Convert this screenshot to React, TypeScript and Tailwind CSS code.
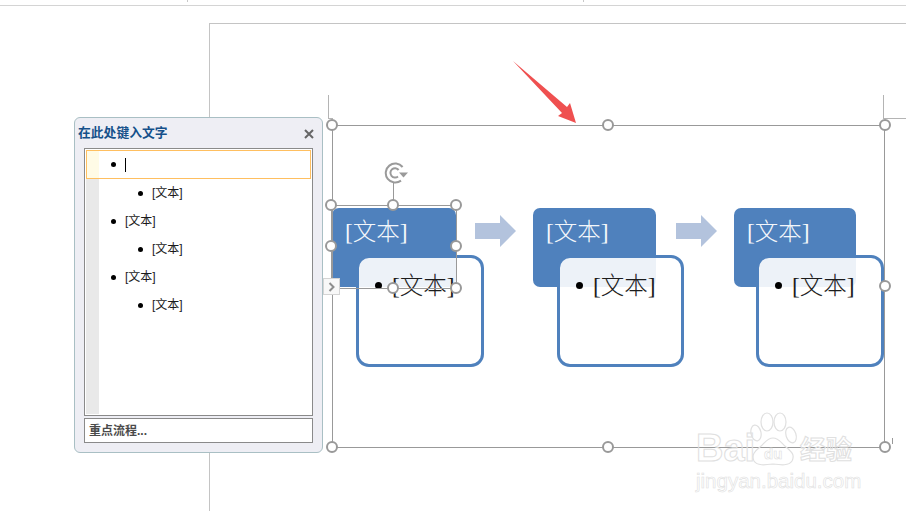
const sans = 'font-["Liberation_Sans","Noto_Sans_CJK_SC",sans-serif]'
const serif = 'font-["Liberation_Serif","Noto_Sans_CJK_SC",serif]'

const handles = [
  'left-[332px] top-[125px]',
  'left-[608px] top-[125px]',
  'left-[885px] top-[125px]',
  'left-[885px] top-[286px]',
  'left-[332px] top-[447px]',
  'left-[608px] top-[447px]',
  'left-[885px] top-[447px]',
  'left-[331px] top-[205px]',
  'left-[393px] top-[205px]',
  'left-[456px] top-[205px]',
  'left-[331px] top-[246px]',
  'left-[456px] top-[246px]',
  'left-[393px] top-[288px]',
  'left-[456px] top-[288px]',
]

const outline = [
  { text: '', sub: false },
  { text: '[文本]', sub: true },
  { text: '[文本]', sub: false },
  { text: '[文本]', sub: true },
  { text: '[文本]', sub: false },
  { text: '[文本]', sub: true },
]

function Handle({ at }: { at: string }) {
  return (
    <div
      className={`absolute ${at} z-30 -ml-[6px] -mt-[6px] h-[12px] w-[12px] rounded-full border-2 border-[#999999] bg-white`}
    />
  )
}

function ProcessStep({ head, card }: { head: string; card: string }) {
  return (
    <div className="relative h-[159px] w-[143px] shrink-0">
      <div
        className={`${head} h-[79px] rounded-[7px] bg-[#4f81bd] pl-[13px] pt-[10px] text-[23.5px] font-light leading-[28px] text-[#f4f7fb] ${serif}`}
      >
        [文本]
      </div>
      <div
        className={`absolute ${card} top-[47px] flex h-[112px] items-start gap-[10px] rounded-[13px] border-[3px] border-[#4f81bd] bg-white/90 pl-[16px] pt-[14px] text-[23.5px] font-light leading-[28px] text-[#1c1c1c] ${serif}`}
      >
        <span className="mt-[10px] h-[7px] w-[7px] shrink-0 rounded-full bg-black" />
        <span className="whitespace-nowrap">[文本]</span>
      </div>
    </div>
  )
}

function BlockArrow() {
  return (
    <svg className="mr-[17px] mt-[7px] shrink-0" width="41" height="32" viewBox="0 0 41 32">
      <path d="M0 8h25V0l16 16-16 16v-8H0z" fill="#b3c3dd" />
    </svg>
  )
}

function TextPane() {
  return (
    <div
      className={`absolute left-[74px] top-[117px] z-40 flex h-[336px] w-[249px] flex-col rounded-[6px] border border-[#a9bfc4] bg-[#eeeef4] px-[9px] pb-[9px] ${sans}`}
    >
      <div className="flex h-[30px] shrink-0 items-center justify-between">
        <span className="-ml-[6px] text-[12.8px] font-bold text-[#15508a]">在此处键入文字</span>
        <svg width="10" height="10" viewBox="0 0 10 10" className="-mr-[1px] mt-[1px]">
          <path d="M1 1l8 8M9 1l-8 8" stroke="#666666" strokeWidth="2" />
        </svg>
      </div>
      <div className="relative min-h-0 flex-1 border border-[#8a8a8a] bg-white p-px">
        <div className="absolute bottom-px left-px top-px w-[13px] bg-[#e9e9e9]" />
        <div className="relative">
          {outline.map((row, i) => (
            <div
              key={i}
              className={`flex items-center text-[12px] text-[#1a1a1a] ${
                i === 0
                  ? 'h-[29px] border border-[#ffbf60] bg-[linear-gradient(90deg,#fffbe6_12px,#ffffff_12px)]'
                  : 'h-[28px]'
              } ${row.sub ? 'pl-[52px]' : i === 0 ? 'pl-[24px]' : 'pl-[25px]'}`}
            >
              <span className="mr-[9px] h-[5px] w-[5px] rounded-full bg-black" />
              {row.text === '' ? <span className="h-[14px] w-px bg-black" /> : row.text}
            </div>
          ))}
        </div>
      </div>
      <div className="mt-[2px] flex h-[25px] shrink-0 items-center border border-[#8a8a8a] bg-white pl-[4px] text-[12px] font-bold text-[#4a4a4a]">
        重点流程...
      </div>
    </div>
  )
}

function Watermark() {
  const outlined = 'text-transparent [-webkit-text-stroke:1px_#e0e0e0]'
  return (
    <div className={`absolute left-[696px] top-[411px] z-20 flex w-[165px] flex-col ${sans}`}>
      <div className="flex h-[56px] items-end">
        <span className={`w-[54px] shrink-0 text-[38px] font-bold leading-[38px] ${outlined}`}>Bai</span>
        <svg width="48" height="56" viewBox="0 0 48 56" fill="none" stroke="#e0e0e0" strokeWidth="1.2" className="shrink-0">
          <ellipse cx="6" cy="22" rx="5" ry="8" transform="rotate(-12 6 22)" />
          <ellipse cx="17" cy="11" rx="6" ry="9" />
          <ellipse cx="30" cy="11" rx="6" ry="9" />
          <ellipse cx="41" cy="24" rx="5" ry="8" transform="rotate(-18 41 24)" />
          <path d="M23 27c6 0 8 5 13 9 6 5 9 8 6 14-3 5-11 4-19 3-8 1-16 2-19-3-3-6 1-10 6-14 5-4 7-9 13-9z" />
          <text x="14" y="48" fontSize="15" fontWeight="700" strokeWidth="0.6">du</text>
        </svg>
        <span className={`ml-[2px] text-[26px] font-bold leading-[34px] ${outlined}`}>经验</span>
      </div>
      <div className="mt-[2px] whitespace-nowrap text-[20.5px] leading-[24px] text-transparent [-webkit-text-stroke:0.6px_#e0e0e0]">
        jingyan.baidu.com
      </div>
    </div>
  )
}

export default function App() {
  return (
    <div className="relative h-[511px] w-[906px] overflow-hidden bg-white">
      {/* page edges and crop marks */}
      <div className="absolute left-0 top-[5px] h-px w-full bg-[#d4d4d4]" />
      <div className="absolute left-[187px] top-0 h-[2px] w-px bg-[#c8c8c8]" />
      <div className="absolute left-[583px] top-0 h-[2px] w-px bg-[#c8c8c8]" />
      <div className="absolute left-[209px] top-[23px] h-[488px] w-[697px] border-l border-t border-[#c4c4c4]" />
      <div className="absolute left-[328px] top-[95px] h-[24px] w-[5px] border-b border-l border-[#b4b4b4]" />
      <div className="absolute left-[883px] top-[95px] h-[24px] w-[23px] border-b border-l border-[#b4b4b4]" />

      {/* SmartArt frame */}
      <div className="absolute left-[332px] top-[125px] z-20 h-[323px] w-[553px] border border-[#999999]" />
      <div className="absolute left-[889px] top-[438px] z-20 h-[6px] w-[4px] border-r border-[#999999]" />

      <div className="absolute left-[332px] top-[208px] flex items-start">
        <ProcessStep head="w-[124px]" card="left-[24px] w-[128px]" />
        <BlockArrow />
        <ProcessStep head="w-[123px]" card="left-[24px] w-[127px]" />
        <BlockArrow />
        <ProcessStep head="w-[122px]" card="left-[22px] w-[128px]" />
      </div>

      {/* selected shape */}
      <div className="absolute left-[331px] top-[205px] z-20 h-[84px] w-[126px] border border-[#999999]" />
      <div className="absolute left-[393px] top-[182px] z-20 h-[23px] w-px bg-[#999999]" />
      <svg className="absolute left-[384px] top-[162px] z-30" width="26" height="22" viewBox="0 0 26 22" fill="none" stroke="#9a9a9a">
        <path d="M17 18.6A9.5 9.5 0 1 1 18.6 5" strokeWidth="2" />
        <path d="M14 14.4A4.6 4.6 0 1 1 14.6 8" strokeWidth="2" />
        <path d="M15 10.5h9l-4.5 5z" fill="#9a9a9a" stroke="none" />
      </svg>
      {handles.map((at) => (
        <Handle key={at} at={at} />
      ))}

      {/* pane toggle */}
      <div className="absolute left-[323px] top-[278px] z-40 flex h-[17px] w-[17px] items-center justify-center border border-[#d4d4d4] bg-[#f8f8f8]">
        <svg width="7" height="10" viewBox="0 0 7 10" fill="none">
          <path d="M1.5 1l4 4-4 4" stroke="#8e8e8e" strokeWidth="2" />
        </svg>
      </div>

      <TextPane />

      <svg className="absolute left-[510px] top-[58px] z-20" width="70" height="68" viewBox="0 0 70 68">
        <path d="M3 3l54 46 3-4 6 20-18-7 4-3z" fill="#ef5050" />
      </svg>

      <Watermark />
    </div>
  )
}
